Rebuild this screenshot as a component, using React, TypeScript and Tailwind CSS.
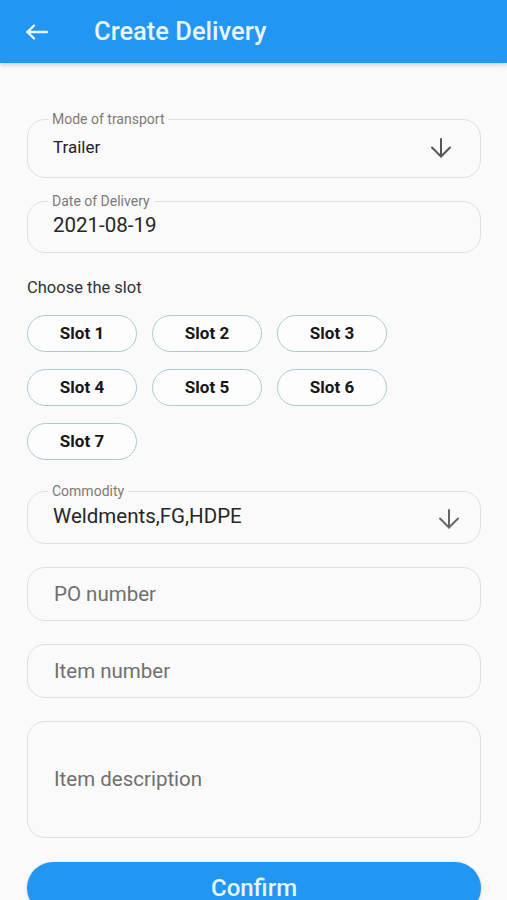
import type { ReactNode } from "react";

const SLOTS = ["Slot 1", "Slot 2", "Slot 3", "Slot 4", "Slot 5", "Slot 6", "Slot 7"];

function BackArrow() {
  return (
    <svg width="22" height="16" viewBox="0 0 22 16" fill="none" stroke="currentColor" strokeWidth="2.4" strokeLinecap="round" strokeLinejoin="round">
      <path d="M21 8H1.5" />
      <path d="M8 1.5L1.5 8L8 14.5" />
    </svg>
  );
}

function DownArrow() {
  return (
    <svg width="22" height="20" viewBox="0 0 22 20" fill="none" stroke="currentColor" strokeWidth="2" strokeLinecap="round" strokeLinejoin="round">
      <path d="M11 1v17.5" />
      <path d="M2 9.5l9 9 9-9" />
    </svg>
  );
}

function LabeledField({ label, children, className }: { label: string; children: ReactNode; className: string }) {
  return (
    <fieldset className={`rounded-[18px] border border-[#dedede] pl-[25px] ${className}`}>
      <legend className="-ml-[5px] px-[4px] text-[14px] leading-[16px] text-[#7a7a7a]">{label}</legend>
      {children}
    </fieldset>
  );
}

export default function App() {
  return (
    <div className="min-h-[900px] bg-[#fafafa] font-['Roboto',sans-serif]">
      <header className="flex h-[63px] items-center bg-[#2196f3] shadow-[0_2px_4px_rgba(0,0,0,0.18)]">
        <div className="ml-[26px] text-[#eaf5ff]">
          <BackArrow />
        </div>
        <h1 className="ml-[46px] text-[25.5px] font-medium text-[#e8f4fe]">Create Delivery</h1>
      </header>

      <main className="pl-[27px] pr-[26px]">
        <LabeledField label="Mode of transport" className="mt-[48px] pt-[10px] pb-[19px] pr-[30px]">
          <div className="flex items-center justify-between">
            <span className="text-[17px] leading-[21px] text-[#232323]">Trailer</span>
            <span className="-mr-[2px] text-[#555555]">
              <DownArrow />
            </span>
          </div>
        </LabeledField>

        <LabeledField label="Date of Delivery" className="mt-[15px] pt-[4px] pb-[15px] pr-[30px]">
          <span className="block text-[20.5px] leading-[24px] text-[#262626]">2021-08-19</span>
        </LabeledField>

        <p className="mt-[25px] text-[16.5px] leading-[20px] text-[#333333]">Choose the slot</p>

        <div className="mt-[17px] grid grid-cols-[110px_110px_110px] gap-x-[15px] gap-y-[17px]">
          {SLOTS.map((s) => (
            <button
              key={s}
              className="h-[37px] rounded-[19px] border border-[#a9ccd3] bg-[#fdfdfd] text-[17px] font-bold text-[#161616]"
            >
              {s}
            </button>
          ))}
        </div>

        <LabeledField label="Commodity" className="mt-[23px] pt-[4px] pb-[14px] pr-[20px]">
          <div className="flex items-center justify-between">
            <span className="text-[20.5px] leading-[24px] text-[#262626]">Weldments,FG,HDPE</span>
            <span className="mt-[6px] text-[#666666]">
              <DownArrow />
            </span>
          </div>
        </LabeledField>

        <div className="mt-[23px] flex h-[54px] items-center rounded-[18px] border border-[#dedede] pl-[26px] text-[20.5px] text-[#707070]">
          PO number
        </div>

        <div className="mt-[23px] flex h-[54px] items-center rounded-[18px] border border-[#dedede] pl-[26px] text-[20.5px] text-[#707070]">
          Item number
        </div>

        <div className="mt-[23px] flex h-[117px] items-center rounded-[18px] border border-[#dedede] pl-[26px] text-[20.5px] text-[#707070]">
          Item description
        </div>

        <button className="mt-[24px] flex h-[52px] w-full items-center justify-center rounded-full bg-[#2196f3] text-[24px] font-medium text-[#e8f4fe] shadow-[0_1px_3px_rgba(0,0,0,0.2)]">
          Confirm
        </button>
      </main>
    </div>
  );
}
